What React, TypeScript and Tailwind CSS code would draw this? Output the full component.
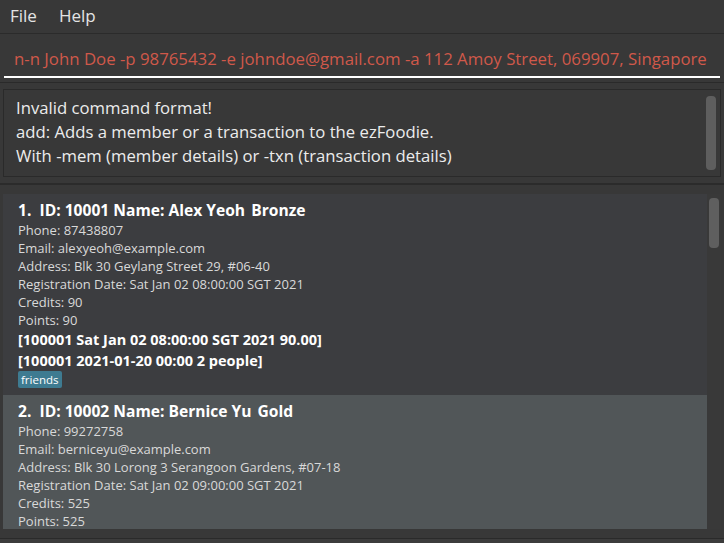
import React from "react"

type Member = {
  idx: number
  id: string
  name: string
  tier: string
  phone: string
  email: string
  address: string
  date: string
  credits: string
  points: string
  extra: string[]
  tags: string[]
}

const members: Member[] = [
  {
    idx: 1,
    id: "10001",
    name: "Alex Yeoh",
    tier: "Bronze",
    phone: "87438807",
    email: "alexyeoh@example.com",
    address: "Blk 30 Geylang Street 29, #06-40",
    date: "Sat Jan 02 08:00:00 SGT 2021",
    credits: "90",
    points: "90",
    extra: ["[100001 Sat Jan 02 08:00:00 SGT 2021 90.00]", "[100001 2021-01-20 00:00 2 people]"],
    tags: ["friends"],
  },
  {
    idx: 2,
    id: "10002",
    name: "Bernice Yu",
    tier: "Gold",
    phone: "99272758",
    email: "berniceyu@example.com",
    address: "Blk 30 Lorong 3 Serangoon Gardens, #07-18",
    date: "Sat Jan 02 09:00:00 SGT 2021",
    credits: "525",
    points: "525",
    extra: [],
    tags: [],
  },
]

function MemberCard({ m, selected }: { m: Member; selected?: boolean }) {
  return (
    <div className={`shrink-0 px-[15px] pt-[5px] pb-[7px] ${selected ? "bg-[#515658]" : "bg-[#3c3d40]"}`}>
      <div className="text-[15.6px] leading-[22px] font-bold text-white">
        {m.idx}.&nbsp; ID: {m.id} Name: {m.name} <span className="ml-[2px]">{m.tier}</span>
      </div>
      <div className="text-[13px] leading-[18px] text-[#d9d9d9]">
        <div>Phone: {m.phone}</div>
        <div>Email: {m.email}</div>
        <div>Address: {m.address}</div>
        <div>Registration Date: {m.date}</div>
        <div>Credits: {m.credits}</div>
        <div>Points: {m.points}</div>
      </div>
      {m.extra.map((e) => (
        <div key={e} className="text-[14.5px] leading-[21px] font-bold text-white">
          {e}
        </div>
      ))}
      {m.tags.length > 0 && (
        <div className="flex gap-1">
          {m.tags.map((t) => (
            <span key={t} className="bg-[#3e7b91] text-white text-[11.5px] leading-[17px] px-[3px] rounded-[2px]">
              {t}
            </span>
          ))}
        </div>
      )}
    </div>
  )
}

export default function App() {
  return (
    <div
      className="w-[724px] h-[543px] bg-[#383838] flex flex-col overflow-hidden text-[#ececec]"
      style={{ fontFamily: '"Open Sans", "Liberation Sans", sans-serif' }}
    >
      {/* Menu bar */}
      <div className="shrink-0 h-[34px] flex items-center gap-[22px] px-[10px] pb-[2px] border-b border-[#2b2b2b] text-[17px] text-[#e4e4e4]">
        <span>File</span>
        <span>Help</span>
      </div>

      {/* Command box */}
      <div className="shrink-0 h-[49px] px-[4px] pt-[11px] border-b border-[#2a2a2a]">
        <div className="border-b-2 border-white h-[33px] pl-[10px] overflow-hidden whitespace-nowrap text-[16.8px] leading-[28px] text-[#d0584a]">
          n-n John Doe -p 98765432 -e johndoe@gmail.com -a 112 Amoy Street, 069907, Singapore
        </div>
      </div>

      {/* Result display */}
      <div className="shrink-0 px-[3px] pt-[6px] pb-[6px] border-b-2 border-[#2b2b2b]">
        <div className="relative h-[88px] border border-[#2a2a2a] pl-[12px] pt-[6px] text-[16.7px] leading-[24px] text-[#ececec]">
          <div>Invalid command format!</div>
          <div>add: Adds a member or a transaction to the ezFoodie.</div>
          <div>With -mem (member details) or -txn (transaction details)</div>
          <div className="absolute right-[4px] top-[6px] w-[10px] h-[74px] rounded-[4px] bg-[#5e5e5e]" />
        </div>
      </div>

      {/* Member list */}
      <div className="flex-1 min-h-0 px-[3px] pt-[9px] pb-[9px] border-b border-[#2a2a2a]">
        <div className="flex h-full">
          <div className="flex-1 flex flex-col overflow-hidden">
            {members.map((m, i) => (
              <MemberCard key={m.id} m={m} selected={i === 1} />
            ))}
          </div>
          <div className="w-[14px] bg-[#393939] pt-[4px] flex justify-center">
            <div className="w-[10px] h-[50px] rounded-[4px] bg-[#5f5f5f]" />
          </div>
        </div>
      </div>
      <div className="shrink-0 h-[4px] bg-[#3c3c3c]" />
    </div>
  )
}
